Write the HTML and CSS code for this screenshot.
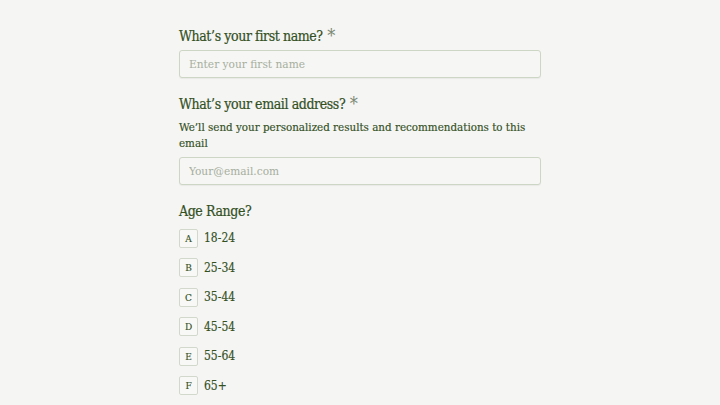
FILE: index.html
```html
<!DOCTYPE html>
<html>
<head>
<meta charset="utf-8">
<link rel="stylesheet" href="styles.css">
</head>
<body>
<form class="form">
  <div class="field">
    <label class="label">What’s your first name? <span class="req">*</span></label>
    <input class="input" type="text" placeholder="Enter your first name">
  </div>
  <div class="field">
    <label class="label">What’s your email address? <span class="req">*</span></label>
    <p class="desc">We’ll send your personalized results and recommendations to this email</p>
    <input class="input" type="text" placeholder="Your@email.com">
  </div>
  <div class="field">
    <div class="label plain">Age Range?</div>
    <ul class="options">
      <li class="option"><span class="key">A</span><span class="opt-text">18-24</span></li>
      <li class="option"><span class="key">B</span><span class="opt-text">25-34</span></li>
      <li class="option"><span class="key">C</span><span class="opt-text">35-44</span></li>
      <li class="option"><span class="key">D</span><span class="opt-text">45-54</span></li>
      <li class="option"><span class="key">E</span><span class="opt-text">55-64</span></li>
      <li class="option"><span class="key">F</span><span class="opt-text">65+</span></li>
    </ul>
  </div>
</form>
</body>
</html>
```
FILE: styles.css
```css
html, body {
  margin: 0;
  padding: 0;
  background: #f5f5f4;
}
body {
  font-family: "DejaVu Serif Condensed", "DejaVu Serif", serif;
  font-stretch: condensed;
  color: #33501f;
}
.form {
  width: 362px;
  margin: 0 auto;
  padding-top: 26px;
  display: flex;
  flex-direction: column;
  gap: 16px;
}
.field {
  display: flex;
  flex-direction: column;
}
.label {
  font-size: 14px;
  line-height: 20px;
  letter-spacing: -0.4px;
  margin-bottom: 4px;
  color: #33501f;
  -webkit-text-stroke: 0.2px #33501f;
}
.label.plain {
  margin-bottom: 8px;
}
.req {
  color: #7a8872;
  -webkit-text-stroke: 0;
  font-size: 18px;
  letter-spacing: 0;
  margin-left: 1px;
  vertical-align: -1px;
}
.desc {
  margin: 1px 0 6px;
  font-size: 11.5px;
  line-height: 16px;
  color: #33501f;
  -webkit-text-stroke: 0.15px #33501f;
}
.input {
  box-sizing: border-box;
  width: 362px;
  height: 28px;
  border: 1px solid #cdd6c4;
  border-radius: 3px;
  background: #f6f6f4;
  padding: 0 9px;
  font-family: inherit;
  font-stretch: condensed;
  font-size: 11.8px;
  color: #33501f;
  outline: none;
  box-shadow: 0 1px 1px rgba(0,0,0,0.05);
}
.input::placeholder {
  color: #a6ae9e;
}
.options {
  list-style: none;
  margin: 0;
  padding: 0;
  display: flex;
  flex-direction: column;
  gap: 11.6px;
}
.option {
  display: flex;
  align-items: center;
  gap: 6px;
  height: 18px;
}
.key {
  box-sizing: border-box;
  width: 19px;
  height: 19px;
  border: 1px solid #d3d8cd;
  border-radius: 2px;
  background: #f8f8f6;
  display: flex;
  align-items: center;
  justify-content: center;
  font-size: 10px;
  color: #33501f;
  -webkit-text-stroke: 0.15px #33501f;
}
.opt-text {
  font-size: 12px;
  color: #33501f;
  -webkit-text-stroke: 0.15px #33501f;
}
```
